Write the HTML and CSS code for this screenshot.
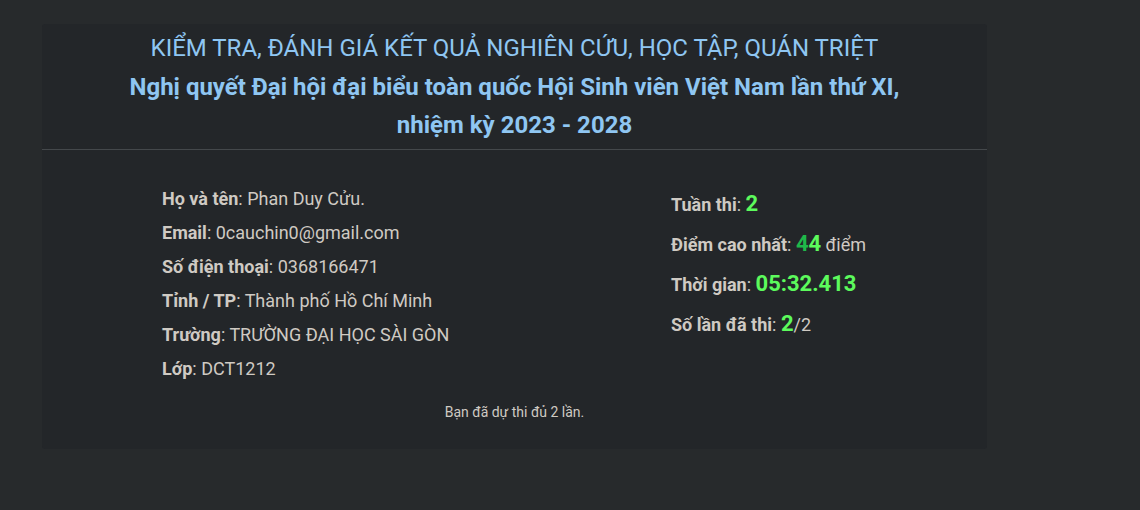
FILE: index.html
```html
<!DOCTYPE html>
<html lang="vi">
<head>
<meta charset="utf-8">
<title>Kết quả</title>
<link rel="stylesheet" href="styles.css">
</head>
<body>
<div class="card">
  <div class="head">
    <div class="t1">KIỂM TRA, ĐÁNH GIÁ KẾT QUẢ NGHIÊN CỨU, HỌC TẬP, QUÁN TRIỆT</div>
    <div class="t2">Nghị quyết Đại hội đại biểu toàn quốc Hội Sinh viên Việt Nam lần thứ XI,</div>
    <div class="t3">nhiệm kỳ 2023 - 2028</div>
  </div>
  <div class="body">
    <div class="cols">
      <div class="left">
        <div class="row"><b>Họ và tên</b>: Phan Duy Cửu.</div>
        <div class="row"><b>Email</b>: 0cauchin0@gmail.com</div>
        <div class="row"><b>Số điện thoại</b>: 0368166471</div>
        <div class="row"><b>Tỉnh / TP</b>: Thành phố Hồ Chí Minh</div>
        <div class="row"><b>Trường</b>: TRƯỜNG ĐẠI HỌC SÀI GÒN</div>
        <div class="row"><b>Lớp</b>: DCT1212</div>
      </div>
      <div class="right">
        <div class="rrow"><b>Tuần thi</b>: <span class="num">2</span></div>
        <div class="rrow"><b>Điểm cao nhất</b>: <span class="num n44"><span class="dk">4</span>4</span> điểm</div>
        <div class="rrow"><b>Thời gian</b>: <span class="num big">05:32.413</span></div>
        <div class="rrow"><b>Số lần đã thi</b>: <span class="num">2</span>/2</div>
      </div>
    </div>
    <div class="note">Bạn đã dự thi đủ 2 lần.</div>
  </div>
</div>
</body>
</html>
```

FILE: styles.css
```css
html, body {
  margin: 0;
  padding: 0;
  background: #272a2c;
  font-family: Roboto, "Noto Sans", sans-serif;
  color: #cfcac3;
}
body {
  padding: 24px 0 0 42px;
  height: 510px;
  box-sizing: border-box;
}
.card {
  width: 945px;
  height: 425px;
  background: #232629;
  border-radius: 3px;
}
.head {
  text-align: center;
  color: #8fc6f2;
  padding-top: 9px;
  padding-bottom: 5px;
  border-bottom: 1px solid #44484b;
}
.t1 {
  font-size: 24px;
  line-height: 30px;
}
.t2, .t3 {
  font-size: 24px;
  font-weight: 700;
  line-height: 38px;
}
.t2 { margin-top: 5px; }
.body {
  padding-top: 38px;
}
.cols {
  display: grid;
  grid-template-columns: 509px 1fr;
  padding-left: 120px;
}
.left { padding-top: 1px; }
.row {
  font-size: 18px;
  line-height: 20px;
  height: 34px;
}
.row b, .rrow b { font-weight: 700; }
.right { padding-top: 4px; }
.rrow {
  font-size: 18px;
  line-height: 24px;
  height: 40px;
}
.num {
  color: #5cfa5c;
  font-weight: 700;
  font-size: 22px;
}
.dk { color: #1fb84a; }
.note {
  text-align: center;
  font-size: 14px;
  margin-top: 11px;
}
```
